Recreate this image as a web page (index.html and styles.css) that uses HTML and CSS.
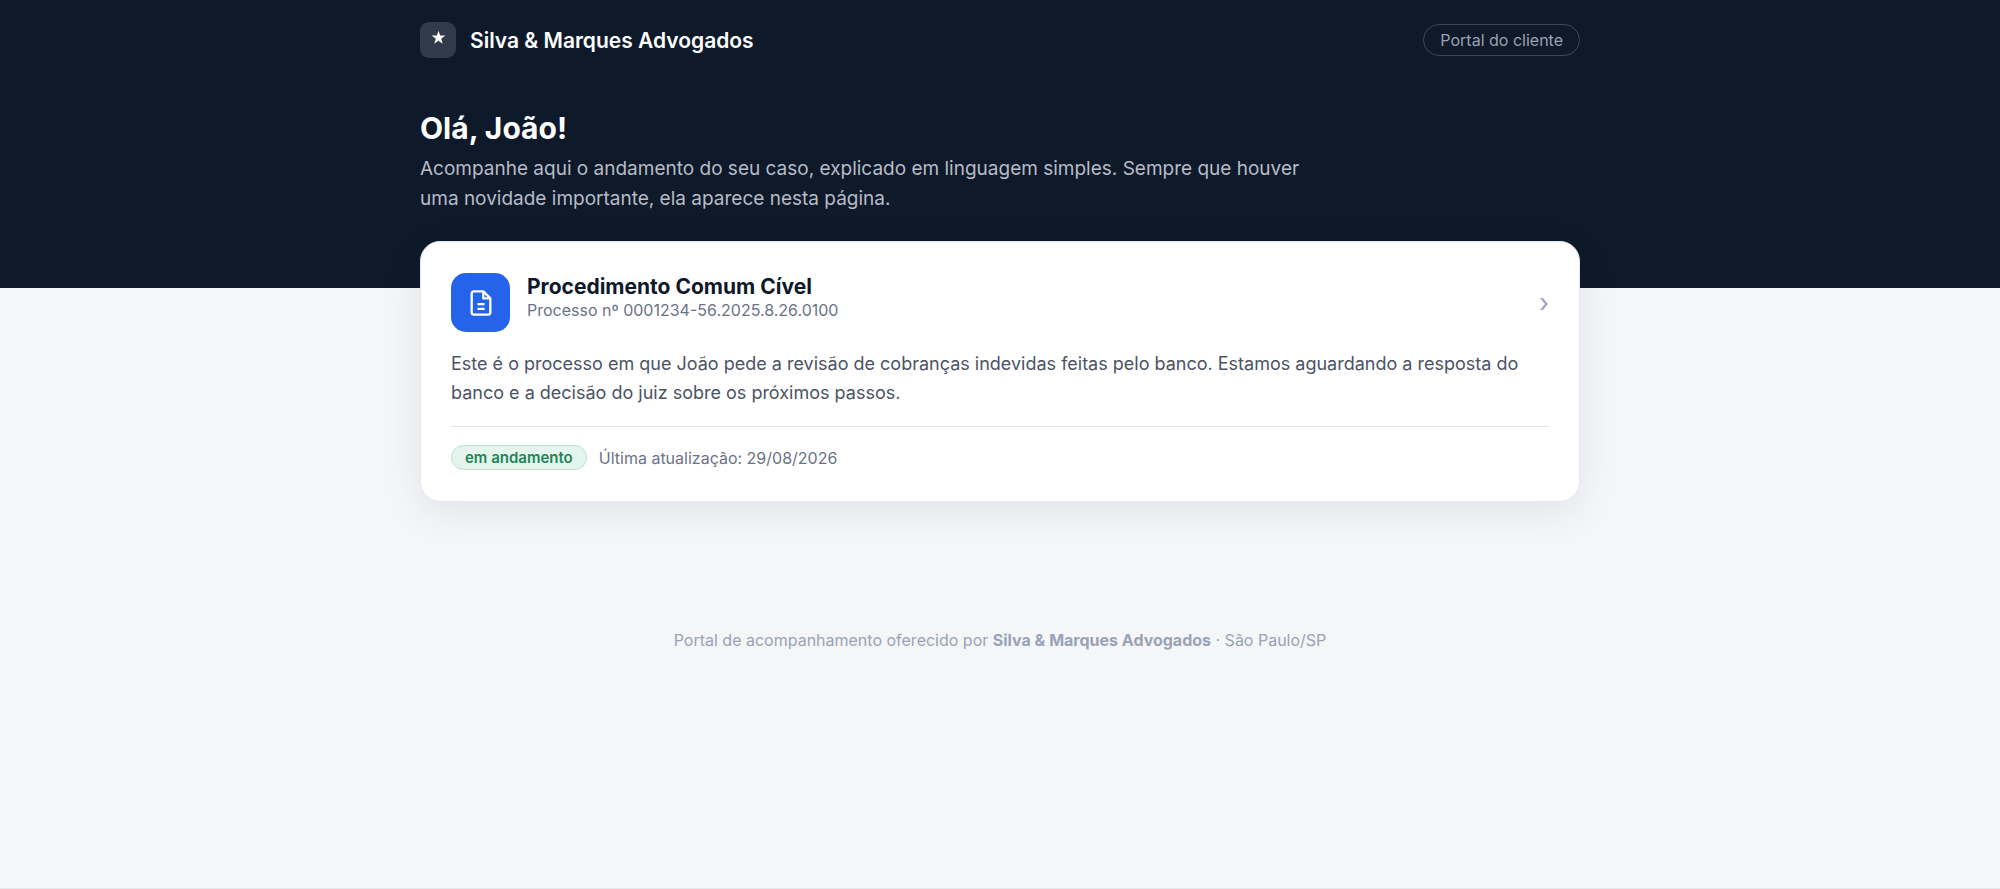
FILE: index.html
```html
<!DOCTYPE html>
<html lang="pt-BR">
<head>
  <meta charset="UTF-8" />
  <meta name="viewport" content="width=device-width, initial-scale=1.0" />
  <title>Portal do cliente - Silva &amp; Marques Advogados</title>
  <link rel="stylesheet" href="styles.css">
</head>
<body>
  <header class="hero">
    <div class="container">
      <div class="topbar">
        <div class="brand">
          <span class="brand-logo">
            <svg viewBox="0 0 24 24" aria-hidden="true">
              <path d="M12 1l2.700 7.900H23l-6.700 4.900 2.500 8L12 17l-6.800 4.800 2.500-8L1 8.900h8.300z" fill="currentColor" />
            </svg>
          </span>
          <span class="brand-name">Silva &amp; Marques Advogados</span>
        </div>
        <span class="portal-tag">Portal do cliente</span>
      </div>
      <h1>Olá, João!</h1>
      <p class="lead">Acompanhe aqui o andamento do seu caso, explicado em linguagem simples. Sempre que houver uma novidade importante, ela aparece nesta página.</p>
    </div>
  </header>

  <main class="container">
    <a href="#processo" class="case-card">
      <div class="case-head">
        <span class="case-icon">
          <svg viewBox="0 0 24 24" fill="none" stroke="currentColor" stroke-width="2" stroke-linejoin="round" aria-hidden="true">
            <path d="M14 2H6a2 2 0 0 0-2 2v16a2 2 0 0 0 2 2h12a2 2 0 0 0 2-2V8z" />
            <path d="M14 2v6h6M9 13h6M9 17h6" />
          </svg>
        </span>
        <div class="case-title">
          <h2>Procedimento Comum Cível</h2>
          <p>Processo nº 0001234-56.2025.8.26.0100</p>
        </div>
        <span class="case-arrow" aria-hidden="true">›</span>
      </div>
      <p class="case-text">Este é o processo em que João pede a revisão de cobranças indevidas feitas pelo banco. Estamos aguardando a resposta do banco e a decisão do juiz sobre os próximos passos.</p>
      <div class="case-foot">
        <span class="badge">em andamento</span>
        <span class="updated">Última atualização: 29/08/2026</span>
      </div>
    </a>
  </main>

  <footer class="footer">
    Portal de acompanhamento oferecido por <strong>Silva &amp; Marques Advogados</strong> · São Paulo/SP
  </footer>
</body>
</html>
```
FILE: styles.css
```css
* {
  box-sizing: border-box;
}
body {
  margin: 0;
  min-height: 100vh;
  font-family: Inter, "Liberation Sans", sans-serif;
  background: #f4f6f8;
  color: #0f172a;
  border-bottom: 1px solid #e5e7eb;
}
h1, h2, p {
  margin: 0;
}
.container {
  width: 100%;
  max-width: 1208px;
  margin: 0 auto;
  padding: 0 24px;
}

/* Header */
.hero {
  background: #0e192a;
  color: #fff;
  padding: 22px 0 74px;
}
.topbar {
  display: flex;
  align-items: center;
  justify-content: space-between;
  margin-bottom: 50px;
}
.brand {
  display: flex;
  align-items: center;
  gap: 14px;
}
.brand-logo {
  display: flex;
  justify-content: center;
  width: 36px;
  height: 36px;
  padding-top: 8px;
  border-radius: 9px;
  background: #313b4a;
}
.brand-logo svg {
  width: 15px;
  height: 15px;
}
.brand-name {
  font-size: 21px;
  line-height: 28px;
  padding-top: 2px;
  font-weight: 600;
}
.portal-tag {
  padding: 0 16px;
  border: 1px solid #3c4757;
  border-radius: 16px;
  font-size: 16px;
  line-height: 30px;
  color: #9aa3b0;
}
.hero h1 {
  font-size: 30px;
  line-height: 40px;
  font-weight: 700;
}
.lead {
  max-width: 880px;
  margin-top: 6px;
  font-size: 19px;
  line-height: 30px;
  color: #b7bcc6;
}

/* Case card */
.case-card {
  display: block;
  margin-top: -47px;
  padding: 31px 30px;
  border: 1px solid #e5e7f0;
  border-radius: 20px;
  background: #fff;
  color: inherit;
  text-decoration: none;
  box-shadow: 0 10px 40px rgba(15, 23, 42, 0.08);
}
.case-head {
  display: flex;
  align-items: center;
  gap: 17px;
}
.case-icon {
  display: flex;
  align-items: center;
  justify-content: center;
  width: 59px;
  height: 59px;
  border-radius: 15px;
  background: #2563eb;
  color: #fff;
}
.case-icon svg {
  width: 28px;
  height: 28px;
}
.case-title {
  flex: 1;
  padding-bottom: 10px;
}
.case-title h2 {
  font-size: 21px;
  line-height: 25px;
  font-weight: 700;
}
.case-title p {
  font-size: 16px;
  line-height: 22px;
  color: #6b7287;
}
.case-arrow {
  font-size: 26px;
  line-height: 30px;
  color: #9ca3af;
}
.case-text {
  margin-top: 17px;
  font-size: 18px;
  line-height: 29px;
  color: #4b5365;
}
.case-foot {
  display: flex;
  align-items: center;
  gap: 12px;
  margin-top: 19px;
  padding-top: 18px;
  border-top: 1px solid #e5e7f0;
}
.badge {
  padding: 0 13px;
  border: 1px solid #b9e0cf;
  border-radius: 13px;
  background: #e3f5ed;
  color: #1f8459;
  font-size: 15px;
  line-height: 23px;
  font-weight: 600;
}
.updated {
  font-size: 16px;
  color: #6b7287;
}

.footer {
  padding: 127px 24px 24px;
  text-align: center;
  font-size: 16px;
  line-height: 22px;
  color: #9aa3b5;
}
```
